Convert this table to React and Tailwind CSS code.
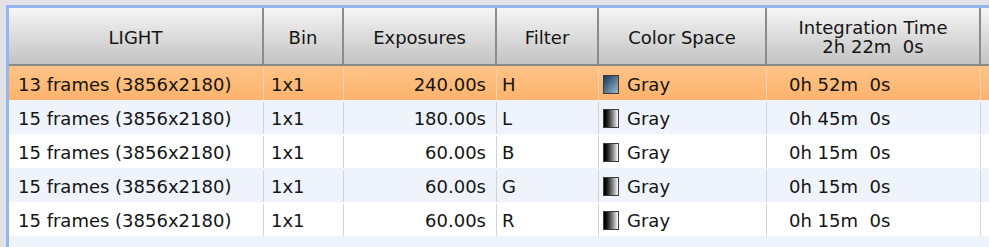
const columns = [
  { key: 'light', label: 'LIGHT', width: 'w-[255px]' },
  { key: 'bin', label: 'Bin', width: 'w-[80px]' },
  { key: 'exp', label: 'Exposures', width: 'w-[153px]' },
  { key: 'filter', label: 'Filter', width: 'w-[102px]' },
  { key: 'cs', label: 'Color Space', width: 'w-[168px]' },
  { key: 'time', label: 'Integration Time\n2h 22m  0s', width: 'w-[214px]' },
];

const rows = [
  { light: '13 frames (3856x2180)', bin: '1x1', exp: '240.00s', filter: 'H', cs: 'Gray', time: '0h 52m  0s', hue: 'blue' },
  { light: '15 frames (3856x2180)', bin: '1x1', exp: '180.00s', filter: 'L', cs: 'Gray', time: '0h 45m  0s' },
  { light: '15 frames (3856x2180)', bin: '1x1', exp: '60.00s', filter: 'B', cs: 'Gray', time: '0h 15m  0s' },
  { light: '15 frames (3856x2180)', bin: '1x1', exp: '60.00s', filter: 'G', cs: 'Gray', time: '0h 15m  0s' },
  { light: '15 frames (3856x2180)', bin: '1x1', exp: '60.00s', filter: 'R', cs: 'Gray', time: '0h 15m  0s' },
];

function Swatch({ hue }) {
  const fill = hue === 'blue'
    ? 'bg-gradient-to-br from-[#173a58] to-[#9dbcd2]'
    : 'bg-gradient-to-r from-[#000000] to-[#ffffff]';
  return <span className={`block shrink-0 w-[16px] h-[19px] border border-[#3c3c3c] ${fill}`} />;
}

export default function App() {
  return (
    <div className="w-[989px] h-[247px] overflow-hidden bg-[#e2e2e7] pl-[6px] pt-[5px] font-['DejaVu_Sans',sans-serif] text-[18px] text-[#141414]">
      <div className="h-full border-l-[3px] border-t-[3px] border-[#93b6ef] bg-[#eef3fc] w-[1000px]">
        {/* header */}
        <div className="flex h-[58px] bg-gradient-to-b from-[#f6f6f6] to-[#c3c3c3] border-b-2 border-[#8a8a8a]">
          {columns.map((c) => (
            <div
              key={c.key}
              className={`${c.width} shrink-0 flex items-center justify-center text-center whitespace-pre leading-[19px] pt-[2px] border-r-2 border-[#8c8c8c]`}
            >
              {c.label}
            </div>
          ))}
          <div className="flex-1" />
        </div>

        {/* body */}
        {rows.map((r, i) => {
          const selected = i === 0;
          const bg = selected
            ? 'bg-gradient-to-b from-[#ffc386] to-[#fcb36c]'
            : i % 2 === 1
              ? 'bg-[#eef3fc]'
              : 'bg-white';
          const line = selected ? 'border-[#f3d3b3]' : 'border-[#d3d3d3]';
          return (
            <div key={i} className={`flex h-[34px] items-center pt-[2px] ${bg}`}>
              <div className={`w-[255px] shrink-0 h-full flex items-center pl-[9px] border-r ${line}`}>{r.light}</div>
              <div className={`w-[80px] shrink-0 h-full flex items-center pl-[7px] border-r ${line}`}>{r.bin}</div>
              <div className={`w-[153px] shrink-0 h-full flex items-center justify-end pr-[10px] border-r ${line}`}>{r.exp}</div>
              <div className={`w-[102px] shrink-0 h-full flex items-center pl-[5px] border-r ${line}`}>{r.filter}</div>
              <div className={`w-[168px] shrink-0 h-full flex items-center gap-[8px] pl-[4px] border-r ${line}`}>
                <Swatch hue={r.hue} />
                <span>{r.cs}</span>
              </div>
              <div className={`w-[214px] shrink-0 h-full flex items-center pl-[22px] whitespace-pre border-r ${line}`}>{r.time}</div>
              <div className="flex-1" />
            </div>
          );
        })}
      </div>
    </div>
  );
}
